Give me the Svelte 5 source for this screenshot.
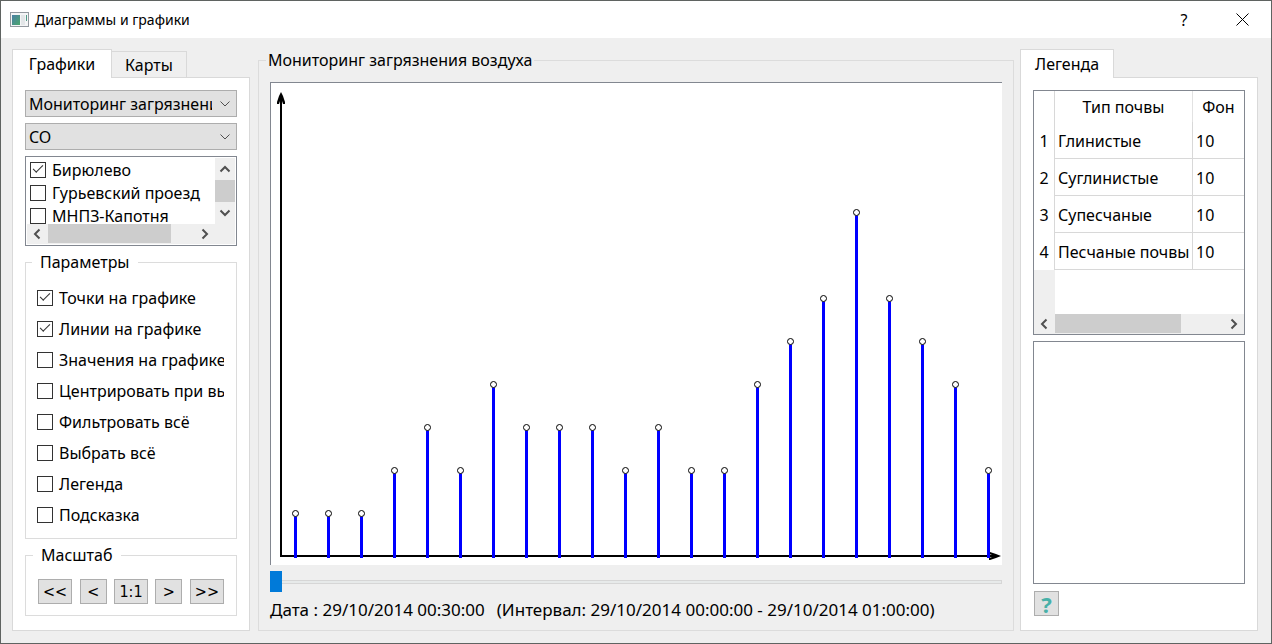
<script>
  // Air pollution monitoring dialog: filters on the left, stem chart in the middle,
  // soil legend on the right.
  let sensors = $state([
    { name: 'Бирюлево', on: true },
    { name: 'Гурьевский проезд', on: false },
    { name: 'МНПЗ-Капотня', on: false },
  ])

  let options = $state([
    { name: 'Точки на графике', on: true },
    { name: 'Линии на графике', on: true },
    { name: 'Значения на графике', on: false },
    { name: 'Центрировать при выборе', on: false },
    { name: 'Фильтровать всё', on: false },
    { name: 'Выбрать всё', on: false },
    { name: 'Легенда', on: false },
    { name: 'Подсказка', on: false },
  ])

  const soils = [
    { name: 'Глинистые', background: 10 },
    { name: 'Суглинистые', background: 10 },
    { name: 'Супесчаные', background: 10 },
    { name: 'Песчаные почвы', background: 10 },
  ]

  const zooms = ['<<', '<', '1:1', '>', '>>']
  const values = [1, 1, 1, 2, 3, 2, 4, 3, 3, 3, 2, 3, 2, 2, 4, 5, 6, 8, 6, 5, 4, 2]

  const STEP_X = 33
  const STEP_Y = 43
  const points = values.map((v, i) => ({ x: 24.5 + i * STEP_X, y: 473.5 - v * STEP_Y }))

  let time = $state(0)
</script>

{#snippet chevron(dir)}
  <svg class="chev {dir}" width="12" height="12" viewBox="0 0 12 12" aria-hidden="true">
    <path d="M1.5 3.5 6 8 10.5 3.5" />
  </svg>
{/snippet}

<div class="dialog">
  <header>
    <svg width="19" height="16" viewBox="0 0 19 16" aria-hidden="true">
      <defs>
        <linearGradient id="ico" x1="0" y1="0" x2="1" y2="1">
          <stop offset="0" stop-color="#4a7fa5" />
          <stop offset="1" stop-color="#4ba66c" />
        </linearGradient>
      </defs>
      <rect x="0.5" y="0.5" width="18" height="14" fill="#f4f5f6" stroke="#93999f" />
      <rect x="2" y="3" width="8" height="10" fill="url(#ico)" />
      <rect x="11" y="3" width="4" height="10" fill="#e3e6e8" />
      <rect x="16" y="3" width="1" height="6" fill="#4f9a86" />
    </svg>
    <h1>Диаграммы и графики</h1>
    <button class="caption" aria-label="Справка">?</button>
    <button class="caption" aria-label="Закрыть">
      <svg width="13" height="13" viewBox="0 0 13 13"><path d="M.5.5l12 12M12.500.5l-12 12" stroke="#000" fill="none" /></svg>
    </button>
  </header>

  <main>
    <section class="side">
      <div class="tabs" role="tablist">
        <button role="tab" class="tab active wide-tab" aria-selected="true">Графики</button>
        <button role="tab" class="tab" aria-selected="false">Карты</button>
      </div>
      <div class="pane">
        <div class="combo">
          <select aria-label="Карта"><option>Мониторинг загрязнения воздуха</option></select>
          {@render chevron('down')}
        </div>
        <div class="combo">
          <select aria-label="Вещество"><option>CO</option></select>
          {@render chevron('down')}
        </div>

        <div class="list">
          <div class="items">
            {#each sensors as s}
              <label class="check"><input type="checkbox" bind:checked={s.on} /><span>{s.name}</span></label>
            {/each}
          </div>
          <div class="vscroll">
            <button aria-label="Вверх">{@render chevron('up')}</button>
            <div class="thumb"></div>
            <button aria-label="Вниз">{@render chevron('down')}</button>
          </div>
          <div class="hscroll">
            <button aria-label="Влево">{@render chevron('left')}</button>
            <div class="track"><div class="thumb wide"></div></div>
            <button aria-label="Вправо">{@render chevron('right')}</button>
          </div>
        </div>

        <fieldset class="options">
          <legend>Параметры</legend>
          {#each options as o}
            <label class="check"><input type="checkbox" bind:checked={o.on} /><span>{o.name}</span></label>
          {/each}
        </fieldset>

        <fieldset class="zoom">
          <legend>Масштаб</legend>
          <div class="zooms">
            {#each zooms as z}
              <button class="btn">{z}</button>
            {/each}
          </div>
        </fieldset>
      </div>
    </section>

    <fieldset class="monitor">
      <legend>Мониторинг загрязнения воздуха</legend>
      <div class="chart">
        <svg viewBox="0 0 731 482" role="img" aria-label="График">
          <path class="axis" d="M10 12V473H726" />
          <path d="M10 9 12 13 14 19 14 21 12 21 11 18 9 18 8 21 6 21 6 19 8 13Z" />
          <path d="M730 473 725 471 719 469 718 469 718 471 721 472 721 474 718 475 718 477 719 477 725 475Z" />
          {#each points as p}
            <line class="stem" x1={p.x} x2={p.x} y1={p.y + 3} y2="475" />
            <circle cx={p.x} cy={p.y} r="3" />
          {/each}
        </svg>
      </div>
      <input class="slider" type="range" min="0" max="100" bind:value={time} aria-label="Время" />
      <p class="date"><span>Дата : 29/10/2014 00:30:00</span><span>(Интервал: 29/10/2014 00:00:00 - 29/10/2014 01:00:00)</span></p>
    </fieldset>

    <section class="side">
      <div class="tabs" role="tablist">
        <button role="tab" class="tab active" aria-selected="true">Легенда</button>
      </div>
      <div class="pane">
        <div class="grid">
          <div class="view">
            <table>
              <thead>
                <tr><th class="num"></th><th class="name">Тип почвы</th><th>Фон</th></tr>
              </thead>
              <tbody>
                {#each soils as s, i}
                  <tr><th class="num">{i + 1}</th><td>{s.name}</td><td>{s.background}</td></tr>
                {/each}
              </tbody>
            </table>
          </div>
          <div class="hscroll">
            <button aria-label="Влево">{@render chevron('left')}</button>
            <div class="track"><div class="thumb mid"></div></div>
            <button aria-label="Вправо">{@render chevron('right')}</button>
          </div>
        </div>
        <div class="info"></div>
        <button class="btn help" aria-label="Помощь">?</button>
      </div>
    </section>
  </main>
</div>

<style>
  :global(body) { margin: 0; background: #efefef; }
  .dialog { box-sizing: border-box; min-height: 100vh; display: flex; flex-direction: column; border: 1px solid #5f6361; background: #efefef; color: #000; font: 16px/20px 'Noto Sans', 'Open Sans', sans-serif; }
  button, select { font: inherit; color: inherit; }
  button { padding: 0; border: 0; background: none; }

  header { display: flex; align-items: center; height: 37px; padding-left: 9px; background: #fff; }
  h1 { flex: 1; margin: 0 0 0 6px; font-size: 14px; font-weight: 400; }
  .caption { width: 58px; height: 37px; display: flex; align-items: center; justify-content: center; }

  main { flex: 1; display: grid; grid-template-columns: 238px minmax(0, 1fr) 238px; padding: 11px 13px 12px 11px; }
  .side { display: flex; flex-direction: column; min-width: 0; }
  .tabs { display: flex; align-items: flex-end; height: 28px; }
  .tab { position: relative; height: 26px; padding: 0 13px; border: 1px solid #d9d9d9; border-width: 1px 1px 0 0; }
  .tab.active { height: 29px; padding: 0 14px; margin-bottom: -1px; border-left-width: 1px; background: #fff; z-index: 1; }
  .tab.wide-tab { min-width: 100px; }
  .pane { flex: 1; display: flex; flex-direction: column; gap: 6px; padding: 12px 12px 14px; border: 1px solid #d9d9d9; background: #fff; }

  .combo { position: relative; height: 27px; }
  .combo select { display: block; box-sizing: border-box; width: 100%; height: 27px; padding: 0 24px 0 3px; border: 1px solid #adadad; border-radius: 0; background: #e1e1e1; appearance: none; }
  .combo .chev { position: absolute; right: 6px; top: 8px; stroke-width: 1; }
  .chev { display: block; fill: none; stroke: #505050; stroke-width: 2; }
  .up { transform: rotate(180deg); }
  .left { transform: rotate(90deg); }
  .right { transform: rotate(-90deg); }

  .list { display: grid; grid-template: 66px 20px / minmax(0, 1fr) 20px; padding: 1px; border: 1px solid #828790; background: linear-gradient(#efefef, #efefef) content-box, #fff; }
  .items { overflow: hidden; padding-left: 3px; background: #fff; }
  .check { display: flex; align-items: center; gap: 6px; height: 23px; white-space: nowrap; }
  .check input { flex: none; width: 16px; height: 16px; margin: 0; border: 1px solid #333; background: #fff; appearance: none; display: grid; place-items: center; }
  .check input:checked::after { content: ''; width: 9px; height: 4px; margin-top: -4px; border: solid #333; border-width: 0 0 1px 1px; transform: rotate(-45deg); }
  .vscroll { display: flex; flex-direction: column; background: #efefef; }
  .hscroll { display: flex; height: 20px; background: #efefef; }
  .vscroll button { height: 22px; display: grid; place-items: center; }
  .hscroll button { flex: none; width: 20px; display: grid; place-items: center; }
  .track { flex: 1; padding: 0 1px; }
  .thumb { height: 22px; background: #cdcdcd; }
  .track .thumb { height: 19px; }
  .wide { width: 84%; }
  .mid { width: 75%; }

  fieldset { min-width: 0; margin: 0; border: 1px solid #dcdcdc; }
  legend { height: 20px; padding: 0 8px; }
  .options { padding: 10px 12px 8px 11px; }
  .options .check { height: 31px; overflow: hidden; }
  .zoom { padding: 14px 12px 11px; }
  .options legend, .zoom legend { margin-left: -5px; }
  .zooms { display: flex; justify-content: space-between; }
  .btn { height: 25px; padding: 0 4px; border: 1px solid #adadad; background: #e1e1e1; font-family: 'DejaVu Sans Condensed', 'DejaVu Sans', sans-serif; }
  .zooms .btn { min-width: 27px; }

  .monitor { margin: 1px 6px 0 8px; padding: 12px 11px 0; }
  .monitor legend { margin-left: -4px; padding: 0 2px; }
  .chart { border: solid #828790; border-width: 1px 0 0 1px; background: #fff; }
  .chart svg { display: block; width: 100%; height: auto; }
  .axis { fill: none; stroke: #000; stroke-width: 2; }
  .stem { stroke: #00f; stroke-width: 3; }
  circle { fill: #fff; stroke: #000; stroke-width: 1; }
  .slider { display: block; box-sizing: border-box; width: 100%; height: 21px; margin: 6px 0 8px; padding: 0; background: none; appearance: none; }
  .slider::-webkit-slider-runnable-track { box-sizing: border-box; height: 4px; border: solid #d6d6d6; border-width: 1px 1px 1px 0; background: #e7eaea; }
  .slider::-webkit-slider-thumb { width: 12px; height: 21px; margin-top: -10px; background: #007ad9; appearance: none; }
  .date { display: flex; flex-wrap: wrap; gap: 0 12px; margin: 0; font-size: 17px; }

  .grid { box-sizing: border-box; height: 245px; display: flex; flex-direction: column; border: 1px solid #828790; }
  .view { flex: 1; overflow: hidden; background: linear-gradient(to right, #efefef 21px, #fff 21px); }
  table { width: 100%; border-collapse: separate; border-spacing: 0; table-layout: fixed; background: #fff; }
  th, td { box-sizing: border-box; padding: 0; font-weight: 400; white-space: nowrap; }
  thead th { height: 31px; border-right: 1px solid #e2e2e2; }
  td { height: 37px; padding: 2px 0 0 3px; border: solid #d8d8d8; border-width: 0 1px 1px 0; }
  th.num { width: 21px; border-right: 1px solid #d8d8d8; }
  .name { width: 138px; }
  tr > :last-child { border-right: 0; }
  .info { flex: 1; border: 1px solid #828790; }
  .help { width: 25px; margin: 1px 0 0 1px; padding: 0; color: #48b0a8; font-family: 'Noto Sans', sans-serif; font-size: 22px; font-weight: 700; }
</style>
